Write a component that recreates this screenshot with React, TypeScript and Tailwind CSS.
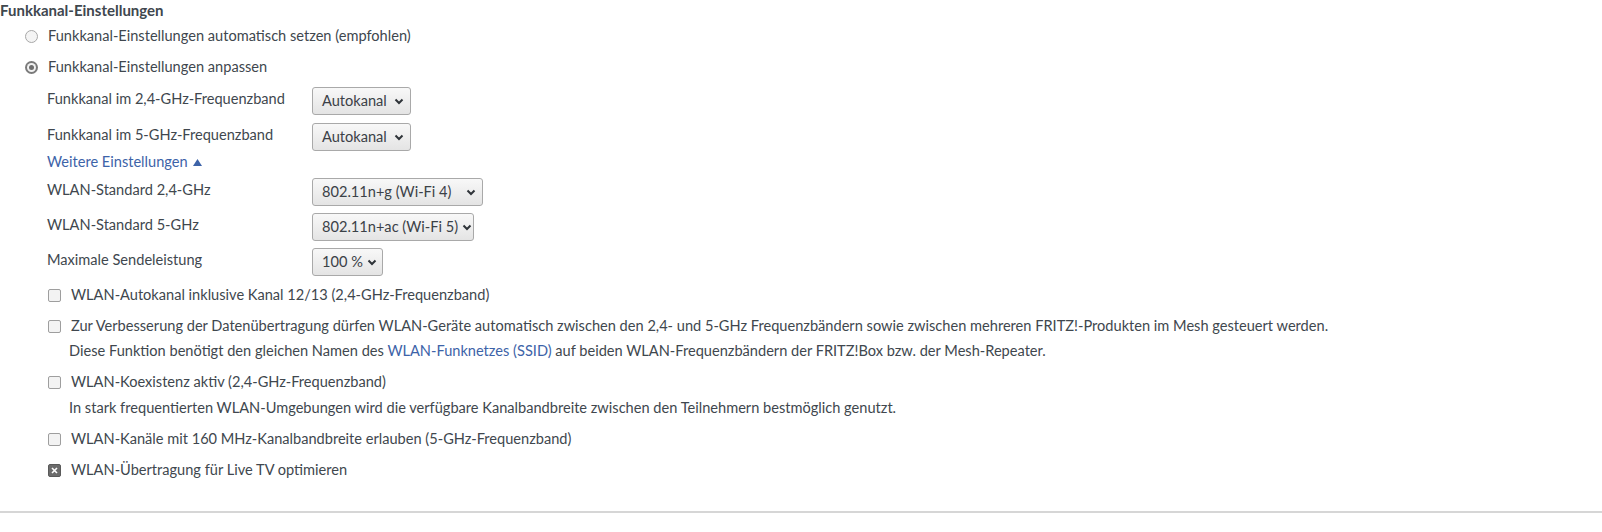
import React from "react";

const font = { fontFamily: "Lato, 'Noto Sans', sans-serif" };

function Chevron() {
  return (
    <svg width="10" height="7" viewBox="0 0 10 7" className="shrink-0">
      <path d="M1.5 1.5 L5 5 L8.5 1.5" fill="none" stroke="#2f3439" strokeWidth="2" />
    </svg>
  );
}

function Select({ value, width }: { value: string; width: string }) {
  return (
    <div
      className={`${width} h-[28px] flex items-center justify-between gap-[4px] pl-[9px] pr-[6px] border border-[#a9a9a9] rounded-[3px] bg-gradient-to-b from-[#f8f8f8] to-[#e4e4e4] text-[#3b4147] whitespace-nowrap`}
    >
      <span>{value}</span>
      <Chevron />
    </div>
  );
}

function Radio({ checked }: { checked?: boolean }) {
  if (checked) {
    return (
      <span className="w-[13px] h-[13px] rounded-full bg-[#7a7a7a] flex items-center justify-center shrink-0">
        <span className="w-[9px] h-[9px] rounded-full bg-[#f2f2f2] flex items-center justify-center">
          <span className="w-[5px] h-[5px] rounded-full bg-[#6f6f6f]" />
        </span>
      </span>
    );
  }
  return <span className="w-[13px] h-[13px] rounded-full border border-[#a8a8a8] bg-[#f4f4f4] shrink-0" />;
}

function Checkbox({ checked }: { checked?: boolean }) {
  if (checked) {
    return (
      <span className="w-[13px] h-[13px] rounded-[2px] bg-[#6c6c6c] border border-[#5a5a5a] flex items-center justify-center shrink-0">
        <svg width="7" height="7" viewBox="0 0 7 7">
          <path d="M1 1 L6 6 M6 1 L1 6" stroke="#fff" strokeWidth="1.6" />
        </svg>
      </span>
    );
  }
  return <span className="w-[13px] h-[13px] rounded-[2px] border border-[#9e9e9e] bg-[#f3f3f3] shrink-0" />;
}

function SelectRow({ label, value, width, mt }: { label: string; value: string; width: string; mt: string }) {
  return (
    <div className={`${mt} h-[28px] flex items-center pl-[47px]`}>
      <span className="w-[265px] shrink-0 pb-[4px]">{label}</span>
      <Select value={value} width={width} />
    </div>
  );
}

function CheckRow({ label, checked, mt }: { label: string; checked?: boolean; mt: string }) {
  return (
    <div className={`${mt} h-[20px] flex items-center pl-[48px] gap-[10px] whitespace-nowrap`}>
      <Checkbox checked={checked} />
      <span>{label}</span>
    </div>
  );
}

export default function App() {
  return (
    <div className="w-[1602px] h-[532px] bg-white text-[14.6px] text-[#40474e] leading-[20px]" style={font}>
      <div className="flex flex-col">
        <div className="h-[20px] font-bold flex items-center text-[15px]">Funkkanal-Einstellungen</div>

        <div className="mt-[6px] h-[20px] flex items-center pl-[25px] gap-[10px]">
          <Radio />
          <span>Funkkanal-Einstellungen automatisch setzen (empfohlen)</span>
        </div>
        <div className="mt-[11px] h-[20px] flex items-center pl-[25px] gap-[10px]">
          <Radio checked />
          <span>Funkkanal-Einstellungen anpassen</span>
        </div>

        <SelectRow mt="mt-[10px]" label="Funkkanal im 2,4-GHz-Frequenzband" value="Autokanal" width="w-[99px]" />
        <SelectRow mt="mt-[8px]" label="Funkkanal im 5-GHz-Frequenzband" value="Autokanal" width="w-[99px]" />

        <div className="mt-[1px] h-[20px] flex items-center pl-[47px] gap-[5px] text-[#3d63a8]">
          <span>Weitere Einstellungen</span>
          <svg width="9" height="7" viewBox="0 0 9 7">
            <path d="M0 7 L4.5 0 L9 7 Z" fill="#3d63a8" />
          </svg>
        </div>

        <SelectRow mt="mt-[6px]" label="WLAN-Standard 2,4-GHz" value="802.11n+g (Wi-Fi 4)" width="w-[171px]" />
        <SelectRow mt="mt-[7px]" label="WLAN-Standard 5-GHz" value="802.11n+ac (Wi-Fi 5)" width="w-[162px]" />
        <SelectRow mt="mt-[7px]" label="Maximale Sendeleistung" value="100 %" width="w-[71px]" />

        <CheckRow mt="mt-[9px]" label="WLAN-Autokanal inklusive Kanal 12/13 (2,4-GHz-Frequenzband)" />
        <CheckRow
          mt="mt-[11px]"
          label="Zur Verbesserung der Datenübertragung dürfen WLAN-Geräte automatisch zwischen den 2,4- und 5-GHz Frequenzbändern sowie zwischen mehreren FRITZ!-Produkten im Mesh gesteuert werden."
        />
        <div className="mt-[5px] h-[20px] flex items-center pl-[69px] whitespace-nowrap">
          <span>
            Diese Funktion benötigt den gleichen Namen des{" "}
            <span className="text-[#3d63a8]">WLAN-Funknetzes (SSID)</span> auf beiden WLAN-Frequenzbändern der
            FRITZ!Box bzw. der Mesh-Repeater.
          </span>
        </div>
        <CheckRow mt="mt-[11px]" label="WLAN-Koexistenz aktiv (2,4-GHz-Frequenzband)" />
        <div className="mt-[6px] h-[20px] flex items-center pl-[69px] whitespace-nowrap">
          In stark frequentierten WLAN-Umgebungen wird die verfügbare Kanalbandbreite zwischen den Teilnehmern
          bestmöglich genutzt.
        </div>
        <CheckRow mt="mt-[11px]" label="WLAN-Kanäle mit 160 MHz-Kanalbandbreite erlauben (5-GHz-Frequenzband)" />
        <CheckRow mt="mt-[11px]" checked label="WLAN-Übertragung für Live TV optimieren" />

        <div className="mt-[31px] h-[2px] bg-[#d6d6d6]" />
      </div>
    </div>
  );
}
